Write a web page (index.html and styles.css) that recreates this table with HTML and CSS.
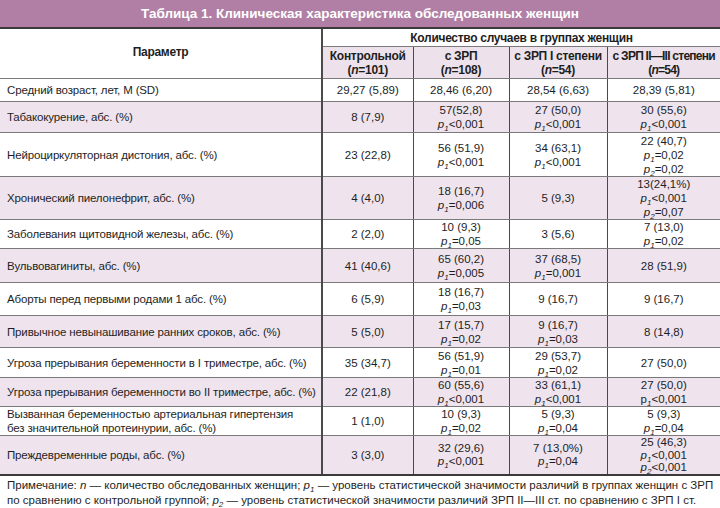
FILE: index.html
```html
<!DOCTYPE html>
<html lang="ru">
<head>
<meta charset="utf-8">
<title>Таблица 1</title>
<link rel="stylesheet" href="styles.css">
</head>
<body>
<div class="page">
  <div class="title">Таблица 1. Клиническая характеристика обследованных женщин</div>
  <table class="t">
    <colgroup>
      <col class="c-param"><col class="c-ctrl"><col class="c-zrp"><col class="c-z1"><col class="c-z23">
    </colgroup>
    <thead>
      <tr class="hr1">
        <th rowspan="2" class="param-h">Параметр</th>
        <th colspan="4" class="grp">Количество случаев в группах женщин</th>
      </tr>
      <tr class="hr2">
        <th class="first">Контрольной<br>(<i>n</i>=101)</th>
        <th>с ЗРП<br>(<i>n</i>=108)</th>
        <th>с ЗРП I степени<br>(<i>n</i>=54)</th>
        <th class="narrow">с ЗРП II—III степени<br>(<i>n</i>=54)</th>
      </tr>
    </thead>
    <tbody>
      <tr class="h23">
        <td>Средний возраст, лет, M (SD)</td>
        <td class="first">29,27 (5,89)</td><td>28,46 (6,20)</td><td>28,54 (6,63)</td><td>28,39 (5,81)</td>
      </tr>
      <tr class="h31 pink">
        <td>Табакокурение, абс. (%)</td>
        <td class="first">8 (7,9)</td>
        <td>57(52,8)<br><i>p</i><sub>1</sub>&lt;0,001</td>
        <td>27 (50,0)<br><i>p</i><sub>1</sub>&lt;0,001</td>
        <td>30 (55,6)<br><i>p</i><sub>1</sub>&lt;0,001</td>
      </tr>
      <tr class="h44">
        <td>Нейроциркуляторная дистония, абс. (%)</td>
        <td class="first">23 (22,8)</td>
        <td>56 (51,9)<br><i>p</i><sub>1</sub>&lt;0,001</td>
        <td>34 (63,1)<br><i>p</i><sub>1</sub>&lt;0,001</td>
        <td>22 (40,7)<br><i>p</i><sub>1</sub>=0,02<br><i>p</i><sub>2</sub>=0,02</td>
      </tr>
      <tr class="h42 pink">
        <td>Хронический пиелонефрит, абс. (%)</td>
        <td class="first">4 (4,0)</td>
        <td>18 (16,7)<br><i>p</i><sub>1</sub>=0,006</td>
        <td>5 (9,3)</td>
        <td>13(24,1%)<br><i>p</i><sub>1</sub>&lt;0,001<br><i>p</i><sub>2</sub>=0,07</td>
      </tr>
      <tr class="h29">
        <td>Заболевания щитовидной железы, абс. (%)</td>
        <td class="first">2 (2,0)</td>
        <td>10 (9,3)<br><i>p</i><sub>1</sub>=0,05</td>
        <td>3 (5,6)</td>
        <td>7 (13,0)<br><i>p</i><sub>1</sub>=0,02</td>
      </tr>
      <tr class="h34 pink">
        <td>Вульвовагиниты, абс. (%)</td>
        <td class="first">41 (40,6)</td>
        <td>65 (60,2)<br><i>p</i><sub>1</sub>=0,005</td>
        <td>37 (68,5)<br><i>p</i><sub>1</sub>=0,001</td>
        <td>28 (51,9)</td>
      </tr>
      <tr class="h33">
        <td>Аборты перед первыми родами 1 абс. (%)</td>
        <td class="first">6 (5,9)</td>
        <td>18 (16,7)<br><i>p</i><sub>1</sub>=0,03</td>
        <td>9 (16,7)</td>
        <td>9 (16,7)</td>
      </tr>
      <tr class="h32 pink">
        <td>Привычное невынашивание ранних сроков, абс. (%)</td>
        <td class="first">5 (5,0)</td>
        <td>17 (15,7)<br><i>p</i><sub>1</sub>=0,02</td>
        <td>9 (16,7)<br><i>p</i><sub>1</sub>=0,03</td>
        <td>8 (14,8)</td>
      </tr>
      <tr class="h30">
        <td>Угроза прерывания беременности в I триместре, абс. (%)</td>
        <td class="first">35 (34,7)</td>
        <td>56 (51,9)<br><i>p</i><sub>1</sub>=0,01</td>
        <td>29 (53,7)<br><i>p</i><sub>1</sub>=0,02</td>
        <td>27 (50,0)</td>
      </tr>
      <tr class="h28 pink">
        <td>Угроза прерывания беременности во II триместре, абс. (%)</td>
        <td class="first">22 (21,8)</td>
        <td>60 (55,6)<br><i>p</i><sub>1</sub>&lt;0,001</td>
        <td>33 (61,1)<br><i>p</i><sub>1</sub>&lt;0,001</td>
        <td>27 (50,0)<br>p<sub class="up">1</sub>&lt;0,001</td>
      </tr>
      <tr class="h28">
        <td>Вызванная беременностью артериальная гипертензия<br>без значительной протеинурии, абс. (%)</td>
        <td class="first">1 (1,0)</td>
        <td>10 (9,3)<br><i>p</i><sub>1</sub>=0,02</td>
        <td>5 (9,3)<br><i>p</i><sub>1</sub>=0,04</td>
        <td>5 (9,3)<br><i>p</i><sub>1</sub>=0,04</td>
      </tr>
      <tr class="h37 pink last">
        <td>Преждевременные роды, абс. (%)</td>
        <td class="first">3 (3,0)</td>
        <td>32 (29,6)<br><i>p</i><sub>1</sub>&lt;0,001</td>
        <td>7 (13,0%)<br><i>p</i><sub>1</sub>=0,04</td>
        <td>25 (46,3)<br><i>p</i><sub>1</sub>&lt;0,001<br><i>p</i><sub>2</sub>&lt;0,001</td>
      </tr>
    </tbody>
  </table>
  <p class="note">Примечание: <i>n</i> — количество обследованных женщин; <i>p</i><sub>1</sub> — уровень статистической значимости различий в группах женщин с ЗРП<br>по сравнению с контрольной группой; <i>p</i><sub>2</sub> — уровень статистической значимости различий ЗРП II—III ст. по сравнению с ЗРП I ст.</p>
</div>
</body>
</html>
```

FILE: styles.css
```css
html, body {
  margin: 0;
  padding: 0;
  background: #ffffff;
}

body {
  font-family: "Liberation Sans", Arial, sans-serif;
  color: #1e1e1e;
  font-size: 11.5px;
}

.page {
  width: 720px;
}

.title {
  height: 27px;
  background: #b17fa5;
  color: #ffffff;
  font-weight: bold;
  font-size: 13.5px;
  line-height: 27px;
  text-align: center;
  border-bottom: 2px solid #3a3a3a;
}

.t {
  width: 720px;
  table-layout: fixed;
  border-collapse: collapse;
  line-height: 14px;
}

.c-param { width: 322px; }
.c-ctrl { width: 91px; }
.c-zrp { width: 96px; }
.c-z1 { width: 98px; }
.c-z23 { width: 113px; }

.t th,
.t td {
  padding: 0;
  text-align: center;
  vertical-align: middle;
  border-bottom: 1px solid #7a7a7a;
  border-left: 1px solid #4a4a4a;
  white-space: nowrap;
}

.t th:first-child,
.t td:first-child {
  border-left: none;
}

.t td.first,
.t th.first {
  border-left: 2px solid #4a4a4a;
}

.t th {
  font-weight: bold;
  font-size: 12px;
  letter-spacing: -0.3px;
}

.t th.narrow {
  letter-spacing: -0.75px;
}

.t .param-h {
  border-bottom: 1px solid #7a7a7a;
  padding-bottom: 4px;
}

.t .grp {
  border-left: 2px solid #4a4a4a;
  height: 16px;
  padding-top: 1px;
}

.hr2 th {
  background: #ede2eb;
  height: 31px;
}

.hr2 th:first-child {
  border-left: 2px solid #4a4a4a;
}

.t tbody td:first-child {
  text-align: left;
  padding-left: 7px;
  letter-spacing: -0.15px;
}

.pink td {
  background: #efe4ee;
}

.t tr.last td {
  border-bottom: 2px solid #3a3a3a;
  line-height: 12.5px;
}

.h23 { height: 23px; }
.h28 { height: 28px; }
.h29 { height: 29px; }
.h30 { height: 30px; }
.h31 { height: 31px; }
.h32 { height: 32px; }
.h33 { height: 33px; }
.h34 { height: 34px; }
.h37 { height: 37px; }
.h42 { height: 42px; }
.h44 { height: 44px; }

sub {
  font-size: 8px;
  font-style: italic;
  line-height: 0;
  vertical-align: -3px;
}

.note {
  margin: 0;
  padding: 2px 0 0 7px;
  font-size: 11.5px;
  line-height: 15px;
  white-space: nowrap;
}
```
